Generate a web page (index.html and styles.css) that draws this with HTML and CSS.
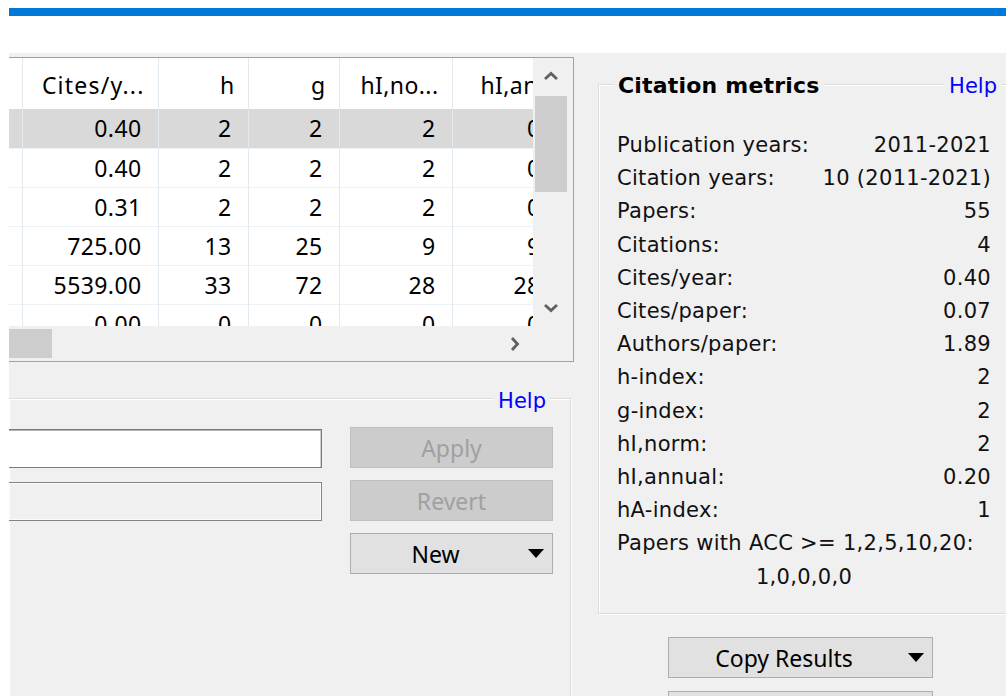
FILE: index.html
```html
<!DOCTYPE html>
<html lang="en">
<head>
<meta charset="utf-8">
<title>Publish or Perish – Results</title>
<link rel="stylesheet" href="styles.css">
</head>
<body>
  <div class="focus-bar"></div>
  <div class="band"></div>
  <main class="app">
    <section class="left">
      <div class="grid-frame">
        <div class="grid-view">
          <table class="results">
            <colgroup>
              <col class="c0"><col class="c1"><col class="c2"><col class="c3"><col class="c4"><col class="c5">
            </colgroup>
            <thead>
              <tr><th></th><th class="wide">Cites/y...</th><th>h</th><th>g</th><th>hI,no...</th><th class="cut">hI,an...</th></tr>
            </thead>
            <tbody>
              <tr class="selected"><td></td><td>0.40</td><td>2</td><td>2</td><td>2</td><td>0</td></tr>
              <tr><td></td><td>0.40</td><td>2</td><td>2</td><td>2</td><td>0</td></tr>
              <tr><td></td><td>0.31</td><td>2</td><td>2</td><td>2</td><td>0</td></tr>
              <tr><td></td><td>725.00</td><td>13</td><td>25</td><td>9</td><td>9</td></tr>
              <tr><td></td><td>5539.00</td><td>33</td><td>72</td><td>28</td><td>28</td></tr>
              <tr><td></td><td>0.00</td><td>0</td><td>0</td><td>0</td><td>0</td></tr>
            </tbody>
          </table>
        </div>
        <div class="vscroll">
          <div class="arrow">
            <svg width="16" height="10" viewBox="0 0 16 10"><polyline points="2,8 8,2.5 14,8" fill="none" stroke="#606060" stroke-width="2.8"/></svg>
          </div>
          <div class="vthumb"></div>
          <div class="track"></div>
          <div class="arrow">
            <svg width="16" height="10" viewBox="0 0 16 10"><polyline points="2,2 8,7.5 14,2" fill="none" stroke="#606060" stroke-width="2.8"/></svg>
          </div>
        </div>
        <div class="hscroll">
          <div class="hthumb"></div>
          <div class="track"></div>
          <div class="arrow">
            <svg width="10" height="16" viewBox="0 0 10 16"><polyline points="2,2 7.5,8 2,14" fill="none" stroke="#606060" stroke-width="2.8"/></svg>
          </div>
        </div>
        <div class="corner"></div>
      </div>

      <div class="group group-edit">
        <div class="group-head"><a class="help" href="#">Help</a></div>
        <div class="edit-grid">
          <input class="field" type="text">
          <button class="btn" disabled>Apply</button>
          <input class="field" type="text" disabled>
          <button class="btn" disabled>Revert</button>
          <span></span>
          <button class="btn dropdown"><span class="label">New</span><span class="caret"></span></button>
        </div>
      </div>
    </section>

    <section class="right">
      <div class="group group-metrics">
        <div class="group-head metrics-head">
          <span class="title">Citation metrics</span>
          <a class="help" href="#">Help</a>
        </div>
        <dl class="metrics">
          <div class="row"><dt>Publication years:</dt><dd>2011-2021</dd></div>
          <div class="row"><dt>Citation years:</dt><dd>10 (2011-2021)</dd></div>
          <div class="row"><dt>Papers:</dt><dd>55</dd></div>
          <div class="row"><dt>Citations:</dt><dd>4</dd></div>
          <div class="row"><dt>Cites/year:</dt><dd>0.40</dd></div>
          <div class="row"><dt>Cites/paper:</dt><dd>0.07</dd></div>
          <div class="row"><dt>Authors/paper:</dt><dd>1.89</dd></div>
          <div class="row"><dt>h-index:</dt><dd>2</dd></div>
          <div class="row"><dt>g-index:</dt><dd>2</dd></div>
          <div class="row"><dt>hI,norm:</dt><dd>2</dd></div>
          <div class="row"><dt>hI,annual:</dt><dd>0.20</dd></div>
          <div class="row"><dt>hA-index:</dt><dd>1</dd></div>
          <div class="row acc"><dt>Papers with ACC &gt;= 1,2,5,10,20:</dt></div>
          <div class="row acc-values"><dd>1,0,0,0,0</dd></div>
        </dl>
      </div>
      <button class="btn dropdown copy"><span class="label">Copy Results</span><span class="caret"></span></button>
      <button class="btn next"></button>
    </section>
  </main>
</body>
</html>
```

FILE: styles.css
```css
html, body {
  margin: 0;
  height: 100%;
  overflow: hidden;
  background: #fff;
}

body {
  box-sizing: border-box;
  padding-left: 9px;
  display: flex;
  flex-direction: column;
  font-family: "Noto Sans", "Open Sans", sans-serif;
  color: #000;
}

.focus-bar {
  flex: none;
  margin-top: 8px;
  height: 8px;
  background: #0078d7;
}

.band {
  flex: none;
  height: 37px;
}

.app {
  flex: 1;
  min-height: 0;
  display: flex;
  align-items: flex-start;
  background: #f0f0f0;
}

/* ---------- left column: result grid + editor ---------- */

.left {
  flex: none;
  width: 565px;
  padding-top: 4px;
}

.grid-frame {
  display: grid;
  grid-template-columns: 524px 36px;
  grid-template-rows: 268px 35px;
  padding-right: 4px;
  border-top: 1px solid #a0a0a0;
  border-right: 1px solid #a0a0a0;
  border-bottom: 1px solid #a0a0a0;
  background: #f0f0f0;
}

.grid-view {
  grid-column: 1;
  grid-row: 1;
  overflow: hidden;
  background: #fff;
}

.results {
  border-collapse: collapse;
  table-layout: fixed;
  width: 548px;
  font-size: 23px;
  letter-spacing: 0.4px;
}

.results .c0 { width: 13px; }
.results .c1 { width: 136px; }
.results .c2 { width: 90px; }
.results .c3 { width: 91px; }
.results .c4 { width: 113px; }
.results .c5 { width: 105px; }

.results th,
.results td {
  padding: 0 16px 0 0;
  text-align: right;
  white-space: nowrap;
  overflow: hidden;
  font-weight: 400;
  border-right: 1px solid #e3e9f1;
}

.results thead tr { height: 51px; }
.results thead th { padding-right: 13px; padding-top: 2px; }
.results thead th.wide { letter-spacing: 1.2px; }
.results thead th.cut { text-align: left; padding: 2px 0 0 28px; }

.results tbody tr {
  height: 39px;
  border-bottom: 1px solid #eef1f5;
}

.results tbody tr.selected { background: #d9d9d9; }

.vscroll {
  grid-column: 2;
  grid-row: 1;
  display: flex;
  flex-direction: column;
  background: #f0f0f0;
}

.hscroll {
  grid-column: 1;
  grid-row: 2;
  display: flex;
  align-items: center;
  background: #f0f0f0;
}

.corner {
  grid-column: 2;
  grid-row: 2;
}

.arrow {
  flex: none;
  width: 36px;
  height: 36px;
  display: flex;
  align-items: center;
  justify-content: center;
}

.track { flex: 1; }

.vthumb {
  flex: none;
  height: 96px;
  margin: 2px 2px 0;
  background: #cdcdcd;
}

.hthumb {
  flex: none;
  width: 43px;
  height: 29px;
  background: #cdcdcd;
}

/* ---------- group boxes ---------- */

.group {
  box-sizing: border-box;
  border: 1px solid #dcdcdc;
  box-shadow: inset 1px 1px 0 #fff, 1px 1px 0 #fff;
}

.group-head {
  display: flex;
  justify-content: flex-end;
  align-items: center;
  height: 26px;
  margin-top: -12px;
  line-height: 26px;
}

.help {
  padding: 0 4px;
  background: #f0f0f0;
  color: #0000ff;
  font-family: "DejaVu Sans", Verdana, sans-serif;
  font-size: 21px;
  text-decoration: none;
}

.group-edit {
  margin-top: 36px;
  width: 562px;
  height: 400px;
  border-left: none;
  border-bottom: none;
}

.group-edit .group-head { margin-top: -11px; padding-right: 20px; }

.edit-grid {
  display: grid;
  grid-template-columns: 313px 203px;
  grid-auto-rows: 41px;
  column-gap: 28px;
  row-gap: 12px;
  margin-top: 13px;
}

.field {
  box-sizing: border-box;
  align-self: end;
  height: 39px;
  margin: 0;
  padding: 0 6px;
  border: 1px solid #7a7a7a;
  border-left: none;
  background: #fff;
  box-shadow: inset 0 1px 0 #b4b4b4, inset -1px 0 0 #d0d0d0;
  font: inherit;
}

.field:disabled {
  border-color: #838383;
  background: #f0f0f0;
  box-shadow: inset 0 0 0 1px #fbfbfb;
}

.btn {
  box-sizing: border-box;
  height: 41px;
  margin: 0;
  padding: 0;
  border: 1px solid #adadad;
  background: #e1e1e1;
  color: #000;
  font-family: "Noto Sans", "Open Sans", sans-serif;
  font-size: 23px;
}

.btn:disabled {
  border-color: #bfbfbf;
  background: #cccccc;
  color: #a0a0a0;
}

.dropdown {
  display: grid;
  grid-template-columns: 1fr 32px;
  align-items: center;
}

.dropdown .label { text-align: center; }

.caret {
  justify-self: center;
  width: 0;
  height: 0;
  border-left: 8.5px solid transparent;
  border-right: 8.5px solid transparent;
  border-top: 9px solid #000;
}

/* ---------- right column: citation metrics ---------- */

.right {
  flex: none;
  display: flex;
  flex-direction: column;
  margin-left: 24px;
  margin-top: 31px;
}

.group-metrics {
  width: 418px;
  height: 530px;
  border-right: none;
  font-family: "DejaVu Sans", Verdana, sans-serif;
  font-size: 21px;
  letter-spacing: 0.3px;
  color: #111;
}

.group-metrics .help { letter-spacing: 0; }

.metrics-head {
  justify-content: space-between;
  padding: 0 15px 0 15px;
}

.metrics-head .title {
  padding: 0 4px;
  background: #f0f0f0;
  font-weight: 700;
  font-size: 22px;
  letter-spacing: 0.2px;
  color: #000;
}

.metrics {
  margin: 30px 0 0;
  padding: 0 25px 0 18px;
}

.metrics .row {
  display: flex;
  justify-content: space-between;
  line-height: 33.2px;
}

.metrics dt,
.metrics dd { margin: 0; }

.metrics .acc-values { justify-content: center; }

.copy {
  width: 265px;
  margin: 23px 0 0 70px;
  grid-template-columns: 1fr 33px;
}

.next {
  width: 265px;
  margin: 13px 0 0 70px;
}
```
